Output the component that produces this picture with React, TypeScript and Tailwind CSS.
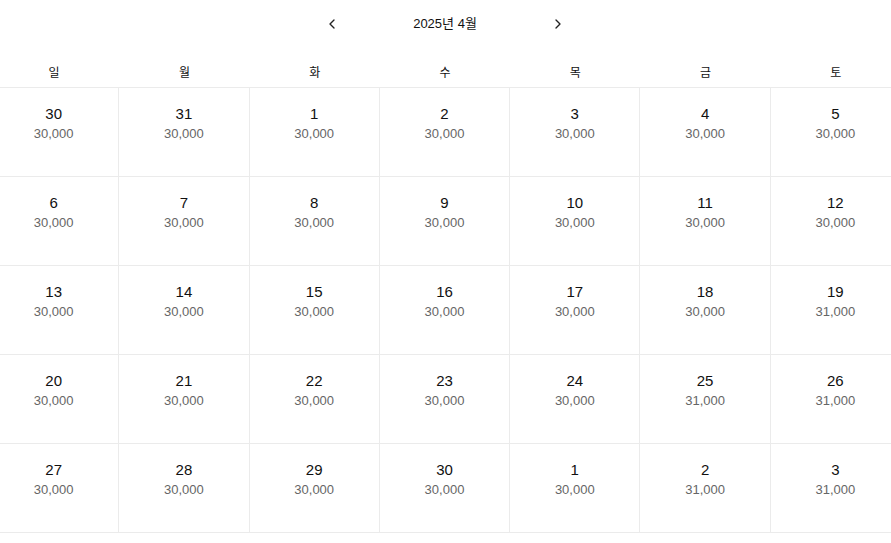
import { ChevronLeft, ChevronRight } from 'lucide-react';

const weekDays = ['일', '월', '화', '수', '목', '금', '토'];

interface DayCell {
  day: number;
  price: string;
}

const cells: DayCell[] = [
  { day: 30, price: '30,000' }, { day: 31, price: '30,000' }, { day: 1, price: '30,000' },
  { day: 2, price: '30,000' }, { day: 3, price: '30,000' }, { day: 4, price: '30,000' },
  { day: 5, price: '30,000' },
  { day: 6, price: '30,000' }, { day: 7, price: '30,000' }, { day: 8, price: '30,000' },
  { day: 9, price: '30,000' }, { day: 10, price: '30,000' }, { day: 11, price: '30,000' },
  { day: 12, price: '30,000' },
  { day: 13, price: '30,000' }, { day: 14, price: '30,000' }, { day: 15, price: '30,000' },
  { day: 16, price: '30,000' }, { day: 17, price: '30,000' }, { day: 18, price: '30,000' },
  { day: 19, price: '31,000' },
  { day: 20, price: '30,000' }, { day: 21, price: '30,000' }, { day: 22, price: '30,000' },
  { day: 23, price: '30,000' }, { day: 24, price: '30,000' }, { day: 25, price: '31,000' },
  { day: 26, price: '31,000' },
  { day: 27, price: '30,000' }, { day: 28, price: '30,000' }, { day: 29, price: '30,000' },
  { day: 30, price: '30,000' }, { day: 1, price: '30,000' }, { day: 2, price: '31,000' },
  { day: 3, price: '31,000' },
];

export default function App() {
  return (
    <div className="min-h-screen bg-white overflow-hidden font-['Liberation_Sans','Noto_Sans_CJK_KR',sans-serif] text-[#111]">
      <div className="w-[912px] -ml-[11px]">
        {/* Month navigation */}
        <div className="h-[49px] flex items-center justify-center gap-[71px] pb-px">
          <button className="p-0.5 text-[#222]">
            <ChevronLeft className="w-4 h-4" strokeWidth={2} />
          </button>
          <span className="text-[13px] leading-4">2025년 4월</span>
          <button className="p-0.5 text-[#222]">
            <ChevronRight className="w-4 h-4" strokeWidth={2} />
          </button>
        </div>

        {/* Week day labels */}
        <div className="grid grid-cols-7 h-[39px] border-b border-[#ebebeb]">
          {weekDays.map((d) => (
            <div key={d} className="text-center text-[12px] leading-[14px] pt-[17px]">
              {d}
            </div>
          ))}
        </div>

        {/* Date cells */}
        <div className="grid grid-cols-7">
          {cells.map((c, i) => (
            <div
              key={i}
              className="h-[89px] border-r border-b border-[#ebebeb] pt-[17px] text-center"
            >
              <div className="text-[15px] leading-[18px] text-[#111]">{c.day}</div>
              <div className="text-[13px] leading-4 mt-[3px] text-[#666]">{c.price}</div>
            </div>
          ))}
        </div>
      </div>
    </div>
  );
}
